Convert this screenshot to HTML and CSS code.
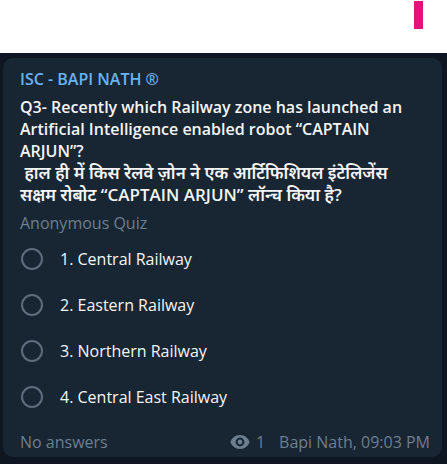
FILE: index.html
```html
<!DOCTYPE html>
<html lang="en">
<head>
    <meta charset="UTF-8">
    <meta name="viewport" content="width=device-width, initial-scale=1.0">
    <title>Quiz</title>
    <link rel="stylesheet" href="styles.css">
</head>
<body>

<div class="top-bar">
    <div class="marker"></div>
</div>

<div class="chat">
    <div class="message">
        <div class="sender">ISC - BAPI NATH ®</div>
        <div class="question">Q3- Recently which Railway zone has launched an Artificial Intelligence enabled robot “CAPTAIN ARJUN”?<br><span class="hindi">&nbsp;हाल ही में किस रेलवे ज़ोन ने एक आर्टिफिशियल इंटेलिजेंस<br>सक्षम रोबोट “CAPTAIN ARJUN” लॉन्च किया है?</span></div>
        <div class="quiz-type">Anonymous Quiz</div>

        <div class="options">
            <div class="option"><span class="radio"></span>1. Central Railway</div>
            <div class="option"><span class="radio"></span>2. Eastern Railway</div>
            <div class="option"><span class="radio"></span>3. Northern Railway</div>
            <div class="option"><span class="radio"></span>4. Central East Railway</div>
        </div>

        <div class="footer">
            <span class="answers">No answers</span>
            <span class="meta">
                <svg class="eye" width="20" height="14" viewBox="0 0 20 14">
                    <path d="M10 0C5 0 1.6 3.4 0.4 7 1.6 10.6 5 14 10 14s8.4-3.4 9.6-7C18.4 3.4 15 0 10 0zm0 11.4A4.4 4.4 0 1 1 10 2.6a4.4 4.4 0 0 1 0 8.8zM10 4.6A2.4 2.4 0 1 0 10 9.4 2.4 2.4 0 0 0 10 4.6z" fill="#6d7f8f"/>
                </svg>
                <span class="views">1</span>
                <span class="time">Bapi Nath, 09:03 PM</span>
            </span>
        </div>
    </div>
</div>

</body>
</html>
```

FILE: styles.css
```css
body {
    margin: 0;
    font-family: "Open Sans", "Noto Sans", sans-serif;
    background-color: #0e1621;
    width: 447px;
    height: 464px;
    overflow: hidden;
}
.top-bar {
    height: 53px;
    background-color: #fff;
    position: relative;
}
.marker {
    position: absolute;
    left: 414px;
    top: 1px;
    width: 9px;
    height: 28px;
    background-color: #e5127d;
}
.chat {
    padding: 5px 5px 0 3px;
}
.message {
    background-color: #182533;
    border-radius: 10px;
    height: 399px;
    padding: 10px 17px 0 17px;
    box-sizing: border-box;
}
.sender {
    color: #6ab3f3;
    font-weight: 600;
    font-size: 16px;
    line-height: 22px;
}
.question {
    color: #f5f5f5;
    font-weight: 600;
    font-size: 16px;
    line-height: 22px;
    margin-top: 6px;
}
.hindi {
    font-size: 17px;
}
.quiz-type {
    color: #6d7f8f;
    font-size: 16px;
    line-height: 22px;
    margin-top: 6px;
}
.options {
    margin-top: 14px;
    display: flex;
    flex-direction: column;
    gap: 24px;
}
.option {
    display: flex;
    align-items: center;
    color: #f5f5f5;
    font-size: 16px;
    line-height: 22px;
}
.radio {
    width: 18px;
    height: 18px;
    border: 2px solid #5d6d7c;
    border-radius: 50%;
    margin-left: 1px;
    margin-right: 17px;
}
.footer {
    display: flex;
    justify-content: space-between;
    align-items: center;
    margin-top: 23px;
    color: #6d7f8f;
    font-size: 16px;
    line-height: 22px;
}
.meta {
    display: flex;
    align-items: center;
    margin-right: -5px;
}
.eye {
    margin-right: 6px;
}
.views {
    margin-right: 14px;
}
```
